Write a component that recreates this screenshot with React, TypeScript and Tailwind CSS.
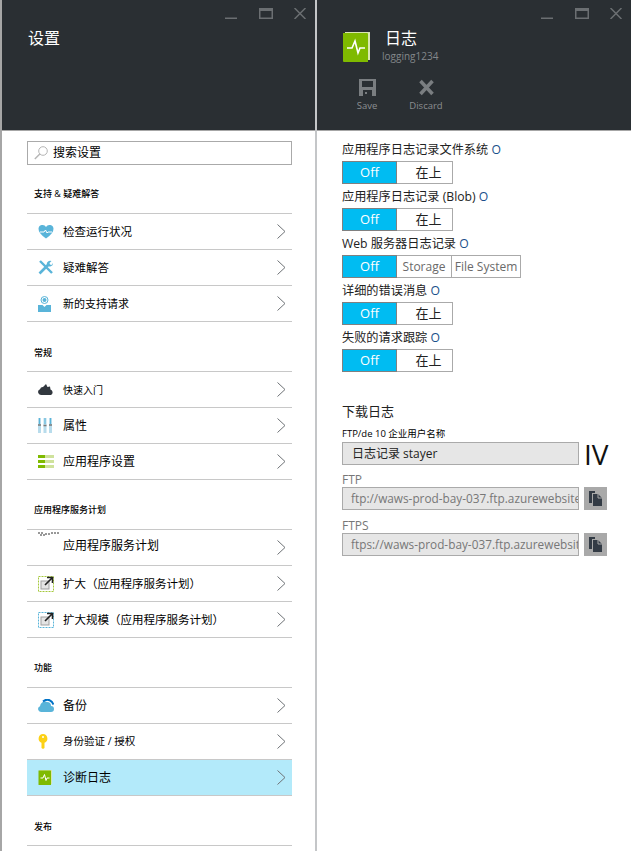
import type { ReactNode } from 'react'

const FONT = "font-['Open_Sans','Noto_Sans_CJK_SC',sans-serif]"

type Row = { label: string; icon: ReactNode; text: string; active?: boolean; pull?: string }

function BookIcon({ width, height, big }: { width: number; height: number; big?: boolean }) {
  return (
    <svg width={width} height={height} viewBox="0 0 28 30" className="block">
      <path d="M3 0h25v28h-2V2H3z" fill="#d8e6b0" />
      <path d="M1 1h24a1 1 0 0 1 1 1v28H2a1 1 0 0 1-1-1z" fill="#7fba00" />
      <path d="M5 16h5l3-7 3 12 2-5h5" fill="none" stroke="#fff" strokeWidth={big ? 1.6 : 2} />
    </svg>
  )
}

function ScaleIcon({ color }: { color: string }) {
  return (
    <svg width="16" height="16" viewBox="0 0 16 16" className="block">
      <rect x="0.5" y="0.5" width="15" height="15" fill="#fff" stroke={color} strokeDasharray="2 1" />
      <rect x="3" y="5" width="8" height="8" fill="#e4e4e4" stroke="#a0a0a0" />
      <path d="M7 9l7-7M9 1.500h5.500V7" fill="none" stroke="#222" strokeWidth="1.600" />
    </svg>
  )
}

const SECTIONS: { title: string; rows: Row[]; className: string }[] = [
  {
    title: '支持 & 疑难解答',
    className: 'h-[48px] pt-[24px]',
    rows: [
      {
        label: '检查运行状况',
        text: 'text-[11.5px]',
        icon: (
          <svg width="16" height="15" viewBox="0 0 16 15" className="block">
            <path d="M8 14.500C3 11 .5 8 .5 4.800A4 4 0 0 1 8 3a4 4 0 0 1 7.500 1.800C15.500 8 13 11 8 14.500z" fill="#59b4d9" />
            <path d="M2 8h4l1.500-2 1.500 3 1-1h4" fill="none" stroke="#fff" />
          </svg>
        ),
      },
      {
        label: '疑难解答',
        text: 'text-[11.5px]',
        icon: (
          <svg width="15" height="15" viewBox="0 0 15 15" className="block">
            <path d="M2 1l12 12" stroke="#59b4d9" strokeWidth="2.400" />
            <path d="M1.500 13.500L10 5" stroke="#59b4d9" strokeWidth="2.600" />
            <path d="M9 5.500A3.500 3.500 0 0 1 13.500 1L11.500 3l.5 1.500 1.500.5 1.500-2A3.500 3.500 0 0 1 9 5.500z" fill="#59b4d9" />
          </svg>
        ),
      },
      {
        label: '新的支持请求',
        text: 'text-[11px]',
        icon: (
          <svg width="13" height="16" viewBox="0 0 13 16" className="block">
            <circle cx="6.500" cy="4" r="3.500" fill="none" stroke="#59b4d9" />
            <circle cx="6.500" cy="4" r="2" fill="#59b4d9" />
            <path d="M0 9h4.500l2 2 2-2H13v7H0z" fill="#59b4d9" />
          </svg>
        ),
      },
    ],
  },
  {
    title: '常规',
    className: 'h-[49px] pt-[26px]',
    rows: [
      {
        label: '快速入门',
        text: 'text-[10px]',
        icon: (
          <svg width="16" height="11" viewBox="0 0 16 11" className="block">
            <path d="M3 11a3 3 0 0 1-1-5.800 3 3 0 0 1 3-2.200L8 0l1.500 3 2.500-.5.500 3A3 3 0 0 1 13 11z" fill="#32383f" />
          </svg>
        ),
      },
      {
        label: '属性',
        text: 'text-[12px]',
        icon: (
          <svg width="14" height="15" viewBox="0 0 14 15" className="block">
            <path d="M0 0h3v15H0zM5.500 0h3v15h-3zM11 0h3v15h-3z" fill="#b8dcec" />
            <path d="M1.500 0v6M7 0v6M12.500 0v6" stroke="#59b4d9" />
            <path d="M0 7h3M5.500 7.500h3M11 7h3" stroke="#7a7a7a" strokeWidth="1.500" />
          </svg>
        ),
      },
      {
        label: '应用程序设置',
        text: 'text-[12px]',
        icon: (
          <svg width="16" height="13" viewBox="0 0 16 13" className="block">
            <path d="M0 0h16v3H0zM0 5h16v3H0zM0 10h16v3H0z" fill="#cfe29c" />
            <path d="M0 0h7v3H0zM0 5h7v3H0zM0 10h7v3H0z" fill="#7fba00" />
          </svg>
        ),
      },
    ],
  },
  {
    title: '应用程序服务计划',
    className: 'h-[49px] pt-[25px]',
    rows: [
      {
        label: '应用程序服务计划',
        text: 'text-[12px]',
        pull: '-mt-[4px]',
        icon: (
          <svg width="21" height="4" viewBox="0 0 21 4" className="block -mt-[16px]">
            <path d="M0 1h5M7 2h5M13 1h8M2 3h6" stroke="#333" strokeDasharray="2 1" />
          </svg>
        ),
      },
      { label: '扩大\uFF08应用程序服务计划\uFF09', text: 'text-[11.5px]', icon: <ScaleIcon color="#a5c83c" /> },
      { label: '扩大规模\uFF08应用程序服务计划\uFF09', text: 'text-[11.5px]', icon: <ScaleIcon color="#59b4d9" /> },
    ],
  },
  {
    title: '功能',
    className: 'h-[49px] pt-[25px]',
    rows: [
      {
        label: '备份',
        text: 'text-[12px]',
        icon: (
          <svg width="16" height="13" viewBox="0 0 16 13" className="block">
            <path d="M3 13a3 3 0 0 1-1-5.800A5 5 0 0 1 9 3a4 4 0 0 1 4 4 3 3 0 0 1 0 6z" fill="#59b4d9" />
            <path d="M5 2.500C8 0 11 0 14 3l1.500 2.500" fill="none" stroke="#0072c6" strokeWidth="2" />
          </svg>
        ),
      },
      {
        label: '身份验证 / 授权',
        text: 'text-[10.5px]',
        icon: (
          <svg width="10" height="15" viewBox="0 0 10 15" className="block">
            <path d="M5 0a4.500 4.500 0 0 1 1.500 8.700V14L5 15l-1.500-1V8.700A4.500 4.500 0 0 1 5 0z" fill="#fcd116" />
            <circle cx="5" cy="3" r="1" fill="#fff" />
          </svg>
        ),
      },
      { label: '诊断日志', text: 'text-[12px]', active: true, icon: <BookIcon width={14} height={15} /> },
    ],
  },
  { title: '发布', className: 'h-[49px] pt-[26px]', rows: [] },
]

function WindowControls() {
  return (
    <div className="flex h-[28px] justify-end pt-[8px] pr-[9px]">
      <svg width="12" height="11" viewBox="0 0 12 11" className="block">
        <rect x="0" y="9.500" width="12" height="1.500" fill="#6b6f72" />
      </svg>
      <svg width="14" height="11" viewBox="0 0 14 11" className="ml-[22px] block">
        <path d="M.75.75h12.500v9.500H.75z" fill="none" stroke="#6b6f72" strokeWidth="1.500" />
        <rect x="0" y="0" width="14" height="3" fill="#6b6f72" />
      </svg>
      <svg width="12" height="11" viewBox="0 0 12 11" className="ml-[21px] block">
        <path d="M.5 0l11 11M11.500 0L.5 11" stroke="#6b6f72" strokeWidth="1.500" />
      </svg>
    </div>
  )
}

function Chevron() {
  return (
    <svg width="9" height="15" viewBox="0 0 9 15" className="block">
      <path d="M.5.5l7.500 7-7.500 7" fill="none" stroke="#6e7276" />
    </svg>
  )
}

function Toggle({ options }: { options: string[] }) {
  return (
    <div className="flex h-[23px] w-fit text-[13px] leading-[21px]">
      <div className="w-[55px] border border-[#808080] bg-[#00bcf2] text-center text-white">Off</div>
      {options.map(o =>
        o === '在上' ? (
          <div key={o} className="w-[56px] border-y border-r border-[#aaaaaa] bg-white pl-[8px] text-center text-[#222]">{o}</div>
        ) : (
          <div key={o} className={`border-y border-r border-[#aaaaaa] bg-white text-center text-[12px] text-[#6a6a6a] ${o === 'Storage' ? 'w-[55px]' : 'w-[69px]'}`}>{o}</div>
        ),
      )}
    </div>
  )
}

function CopyButton() {
  return (
    <div className="ml-[5px] flex h-[23px] w-[23px] items-center justify-center bg-[#a9a9a9]">
      <svg width="13" height="15" viewBox="0 0 13 15" className="block">
        <path d="M0 0h6v2H3v10H0z" fill="#333b45" />
        <path d="M4 3h5l4 4v8H4z" fill="#333b45" />
        <path d="M9 3v4h4" fill="none" stroke="#a9a9a9" />
      </svg>
    </div>
  )
}

const LOGS: { label: string; options: string[] }[] = [
  { label: '应用程序日志记录文件系统', options: ['在上'] },
  { label: '应用程序日志记录 (Blob)', options: ['在上'] },
  { label: 'Web 服务器日志记录', options: ['Storage', 'File System'] },
  { label: '详细的错误消息', options: ['在上'] },
  { label: '失败的请求跟踪', options: ['在上'] },
]

export default function App() {
  return (
    <div className={`${FONT} flex h-[851px] w-[631px] overflow-hidden bg-white text-black`}>
      {/* Settings blade */}
      <section className="w-[315px] shrink-0 border-l-2 border-[#a6a6a6]">
        <header className="h-[130px] bg-[#2a2f33]">
          <WindowControls />
          <h1 className="pl-[26px] text-[16px] font-normal leading-[20px] text-white">设置</h1>
        </header>
        <div className="border-t border-[#a6a6a6] pl-[25px] pr-[23px]">
          <div className="mt-[10px] flex h-[24px] items-center border border-[#aaaaaa] pl-[6px]">
            <svg width="14" height="14" viewBox="0 0 14 14" className="block">
              <circle cx="9" cy="5" r="4.300" fill="none" stroke="#b5b5b5" />
              <path d="M5.800 8L.8 13" stroke="#b5b5b5" strokeWidth="1.400" />
            </svg>
            <span className="ml-[5px] text-[12px] leading-none">搜索设置</span>
          </div>
          {SECTIONS.map(section => (
            <div key={section.title}>
              <div className={`${section.className} pl-[7px] text-[9px] font-medium leading-[10px]`}>{section.title}</div>
              <ul className="border-t border-[#c8c8c8]">
                {section.rows.map(row => (
                  <li
                    key={row.label}
                    className={`flex h-[36px] items-center border-b border-[#c8c8c8] pl-[11px] pr-[6px] ${row.active ? 'bg-[#b3eafa]' : ''}`}
                  >
                    <span className="flex w-[25px] shrink-0 justify-start">{row.icon}</span>
                    <span className={`${row.text} ${row.pull ?? ''} flex-1 leading-none`}>{row.label}</span>
                    <Chevron />
                  </li>
                ))}
              </ul>
            </div>
          ))}
        </div>
      </section>

      {/* Logs blade */}
      <section className="flex-1 border-l-2 border-[#c4c6c8]">
        <header className="h-[130px] bg-[#2a2f33]">
          <WindowControls />
          <div className="flex pl-[25px]">
            <div className="mt-[4px]"><BookIcon width={28} height={30} big /></div>
            <div className="ml-[15px]">
              <h2 className="text-[16px] font-normal leading-[20px] text-white">日志</h2>
              <p className="-ml-[3px] mt-[1px] text-[10px] leading-[14px] text-[#84888b]">logging1234</p>
            </div>
          </div>
          <div className="mt-[16px] flex pl-[28px] text-[9.500px] text-[#8a8e91]">
            <div className="flex w-[44px] flex-col items-center">
              <svg width="17" height="17" viewBox="0 0 17 17" className="block">
                <path fillRule="evenodd" d="M0 0h17v17H0zM3 2v6h11V2zM4 11v6h9v-6z" fill="#7a7e81" />
                <rect x="6" y="13" width="2" height="2" fill="#7a7e81" />
              </svg>
              <span className="mt-[3px] leading-[13px]">Save</span>
            </div>
            <div className="ml-[19px] flex w-[36px] flex-col items-center">
              <svg width="15" height="17" viewBox="0 0 15 17" className="block">
                <path d="M1.500 2l12 13M13.500 2l-12 13" stroke="#7a7e81" strokeWidth="3.500" />
              </svg>
              <span className="mt-[3px] leading-[13px]">Discard</span>
            </div>
          </div>
        </header>
        <div className="border-t border-[#a6a6a6] pl-[25px]">
          <div className="pt-[6px]">
            {LOGS.map(log => (
              <div key={log.label}>
                <div className="h-[24px] text-[12.2px] leading-[26px] text-[#222]">
                  {log.label} <span className="text-[#1a4f8a]">O</span>
                </div>
                <Toggle options={log.options} />
              </div>
            ))}
          </div>
          <h3 className="mt-[29px] text-[13px] font-normal leading-[20px] text-[#222]">下载日志</h3>
          <div className="mt-[6px] text-[9.500px] leading-[14px]">FTP/de 10 企业用户名称</div>
          <div className="mt-[1px] flex h-[23px] items-center">
            <div className="flex h-[23px] w-[237px] items-center border border-[#aaaaaa] bg-[#e6e6e6] pl-[9px] text-[12px] text-[#222]">日志记录 stayer</div>
            <span className="ml-[5px] text-[28px] leading-none text-[#111]">IV</span>
          </div>
          <div className="mt-[7px] text-[12px] leading-[15px] text-[#777]">FTP</div>
          <div className="flex">
            <div className="flex h-[23px] w-[237px] items-center overflow-hidden whitespace-nowrap border border-[#aaaaaa] bg-[#e6e6e6] pl-[8px] text-[11.800px] text-[#777]">ftp://waws-prod-bay-037.ftp.azurewebsites.windows.net</div>
            <CopyButton />
          </div>
          <div className="mt-[8px] text-[12px] leading-[15px] text-[#777]">FTPS</div>
          <div className="flex">
            <div className="flex h-[23px] w-[237px] items-center overflow-hidden whitespace-nowrap border border-[#aaaaaa] bg-[#e6e6e6] pl-[8px] text-[11.800px] text-[#777]">ftps://waws-prod-bay-037.ftp.azurewebsites.windows.net</div>
            <CopyButton />
          </div>
        </div>
      </section>
    </div>
  )
}
